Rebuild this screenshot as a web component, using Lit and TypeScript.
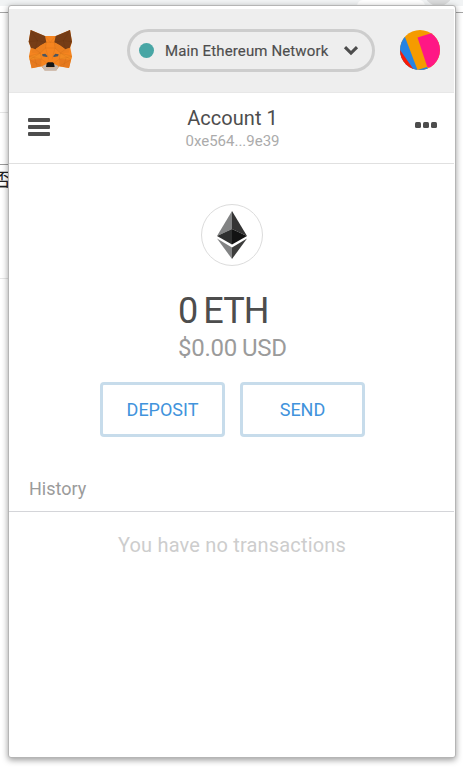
import { LitElement, html, css, svg } from "lit";
import { customElement, property } from "lit/decorators.js";

@customElement("fox-logo")
class FoxLogo extends LitElement {
  static styles = css`
    :host, svg { display: block; width: 45px; height: 43px; }
  `;
  render() {
    const facets: [string, string][] = [
      ["32,30 74,48 108,48 150,30 156,65 151,83 156,109 147,144 118,139 109,151 74,151 64,139 35,145 27,109 32,83 26,65", "#f5841f"],
      ["32,30 75,48 79,67 62,76 46,88 33,84 30,76 26,65", "#763d16"],
      ["150,30 107,48 103,67 120,76 136,88 149,84 152,76 156,65", "#763d16"],
      ["46,88 79,67 77,84 61,99 36,98 33,84", "#ec801f"],
      ["136,88 103,67 105,84 121,99 146,98 149,84", "#ec801f"],
      ["27,109 62,99 64,117 29,119", "#f28a21"],
      ["156,109 120,99 118,117 153,119", "#f28a21"],
      ["29,119 64,117 64,139 35,145", "#e67a1f"],
      ["153,119 118,117 118,139 147,144", "#e67a1f"],
      ["66,103 76,101 83,109 80,111 68,109", "#4a5560"],
      ["116,103 106,101 99,109 102,111 114,109", "#4a5560"],
      ["66,139 81,131 81,142 101,142 101,131 116,139 109,152 74,152", "#c7b9ae"],
      ["80,130 84,127 98,127 102,130 104,141 78,141", "#161616"],
    ];
    return html`<svg viewBox="24 27 135 129">
      ${facets.map(([p, c]) => svg`<polygon points=${p} fill=${c}></polygon>`)}
      <path d="M79 67 77 84 61 99 29 119 64 139M46 88 61 99 64 117 27 109 61 99M136 88 121 99 118 117 156 109 121 99M75 48 91 67 107 48M79 67H103L105 84 121 99 153 119 118 139M77 84 86 118M105 84 96 118M77 84H105M64 117 81 130M118 117 101 130M44 114 52 142M138 114 130 142"
        fill="none" stroke="#a34f10" stroke-width="1.1" opacity=".38"></path>
      <path d="M32 30 52 62 79 67M26 65 52 62 46 88M150 30 130 62 103 67M156 65 130 62 136 88"
        fill="none" stroke="#54290d" stroke-width="1.1" opacity=".4"></path>
    </svg>`;
  }
}

@customElement("network-picker")
class NetworkPicker extends LitElement {
  @property() name = "";
  static styles = css`
    :host {
      box-sizing: border-box; display: flex; align-items: center;
      width: 248px; height: 43px; padding: 0 12px 0 9px;
      border: 3px solid #cdcdcd; border-radius: 22px;
    }
    .dot { width: 15px; height: 15px; border-radius: 50%; background: #48a6a5; }
    .name { margin-left: 11px; flex: 1; font-size: 15px; -webkit-text-stroke: 0.15px #4d4d4d; letter-spacing: 0.13px; color: #4d4d4d; white-space: nowrap; }
    svg { display: block; width: 16px; height: 11px; margin-right: 1px; }
  `;
  render() {
    return html`<span class="dot"></span><span class="name">${this.name}</span>
      <svg viewBox="0 0 16 11"><path d="M2 2.2 8 8.1 14 2.2" fill="none" stroke="#4d4d4d" stroke-width="3.1"></path></svg>`;
  }
}

@customElement("app-root")
class AppRoot extends LitElement {
  static styles = css`
    :host {
      display: block; position: relative; width: 463px; height: 768px; overflow: hidden;
      background: #fff; font-family: Roboto, "Noto Sans", sans-serif;
    }
    .page { position: absolute; inset: 0; overflow: hidden; }
    .tabs { height: 6px; background: #f1f3f4; }
    .rule { position: absolute; left: 0; width: 100%; height: 1px; background: #e6e6e6; }
    .r1 { top: 12px; background: #a5a5a5; }
    .r2 { top: 112px; width: 9px; }
    .r3 { top: 164px; width: 9px; background: #999; }
    .r4 { top: 187px; width: 9px; background: #999; }
    .r5 { top: 278px; width: 9px; }
    .glyph { position: absolute; left: -7px; top: 167px; font: 18px/22px "Noto Sans CJK SC", sans-serif; color: #222; }
    .bubble { position: absolute; border-radius: 50%; }
    .b1 { left: 424px; top: -23px; width: 29px; height: 29px; background: #dadbdc; }
    .b2 { left: 357px; top: 0; width: 68px; height: 6px; border-radius: 8px 8px 0 0; background: #fff; }
    .panel {
      position: absolute; left: 8px; top: 5px; width: 448px; height: 753px; box-sizing: border-box;
      display: flex; flex-direction: column; padding-top: 3px;
      border: 1px solid #b5b5b5; border-radius: 3px; background: #fff;
      box-shadow: 0 2px 6px rgba(0, 0, 0, .4);
    }
    .top {
      box-sizing: border-box; height: 84px; width: 445px; flex: none; display: flex; align-items: center;
      justify-content: space-between; padding: 0 14px 0 19px;
      background: #eee; border-bottom: 1px solid #e7e7e7;
    }
    .top network-picker { margin-left: 29px; }
    .avatar { display: block; width: 40px; height: 40px; margin-bottom: 2px; }
    .account {
      box-sizing: border-box; height: 71px; flex: none; display: flex; justify-content: space-between;
      width: 445px; padding: 0 17px 0 19px; border-bottom: 1px solid #e0e0e0;
    }
    .menu { display: flex; flex-direction: column; gap: 3px; width: 22px; padding-top: 25px; }
    .menu i { height: 4px; border-radius: 1px; background: #4d4d4d; }
    .who { text-align: center; padding-top: 12px; }
    .title { font-size: 20px; line-height: 26px; letter-spacing: 0.05px; color: #4d4d4d; }
    .addr { font-size: 15px; line-height: 18px; margin-top: 1px; color: #ababab; }
    .more { display: flex; gap: 2px; padding-top: 29px; }
    .more i { width: 6px; height: 6px; border-radius: 1.5px; background: #4d4d4d; }
    .coin {
      box-sizing: border-box; width: 62px; height: 62px; flex: none; margin: 40px 0 0 192px; display: grid; place-items: center;
      border: 1px solid #dcdcdc; border-radius: 50%;
    }
    .coin svg { display: block; width: 30px; height: 48px; }
    .balance { margin: 25px 0 0 169px; white-space: nowrap; }
    .eth { font-size: 36px; line-height: 42px; margin-top: -1px; margin-bottom: 1px; word-spacing: -2px; letter-spacing: -0.9px; color: #4d4d4d; }
    .usd { font-size: 24px; line-height: 30px; word-spacing: -0.6px; letter-spacing: -0.27px; color: #9b9b9b; }
    .actions { display: flex; gap: 15px; margin: 19px 0 0 91px; }
    button {
      box-sizing: border-box; width: 125px; height: 55px; padding: 0; border: 3px solid #c7dceb;
      border-radius: 4px; background: #fff; color: #4193dc; font: 18px Roboto, sans-serif;
    }
    .history {
      box-sizing: border-box; height: 37px; width: 445px; margin-top: 38px; padding-left: 20px; border-bottom: 1px solid #d4d5d9;
      font-size: 18px; line-height: 28px; color: #9b9b9b;
    }
    .empty { margin-top: 20px; text-align: center; font-size: 20px; line-height: 26px; letter-spacing: 0.18px; color: #cdcdcd; }
  `;
  render() {
    return html`
      <div class="page">
        <div class="tabs"></div>
        <span class="bubble b2"></span><span class="bubble b1"></span>
        <i class="rule r1"></i><i class="rule r2"></i><i class="rule r3"></i><i class="rule r4"></i><i class="rule r5"></i>
        <span class="glyph">否</span>
      </div>
      <main class="panel">
        <header class="top">
          <fox-logo></fox-logo>
          <network-picker name="Main Ethereum Network"></network-picker>
          <svg class="avatar" viewBox="0 0 40 40">
            <clipPath id="disc"><circle cx="20" cy="20" r="20"></circle></clipPath>
            <g clip-path="url(#disc)">
              <path fill="#f59b00" d="M0 0H40V40H0z"></path>
              <path fill="#2583e3" d="M0 0 5 7 17.5 40H0z"></path>
              <path fill="#fa1a05" d="M-2 17 14 40H-2z"></path>
              <path fill="#2583e3" d="M16.5 40.3 27 37 30 42H17z"></path>
              <path fill="#ff1785" d="M17.5 7.5 40 .5V40L27.3 37z"></path>
            </g>
          </svg>
        </header>
        <section class="account">
          <div class="menu"><i></i><i></i><i></i></div>
          <div class="who">
            <div class="title">Account 1</div>
            <div class="addr">0xe564...9e39</div>
          </div>
          <div class="more"><i></i><i></i><i></i></div>
        </section>
        <div class="coin">
          <svg viewBox="0 0 30 48">
            <path fill="#828384" d="M15 0V18L0 25z"></path>
            <path fill="#343434" d="M15 0 30 25 15 18z"></path>
            <path fill="#2f3030" d="M15 18V33.5L0 25z"></path>
            <path fill="#131313" d="M15 18 30 25 15 33.5z"></path>
            <path fill="#828384" d="M0 27.5 15 36.5V48z"></path>
            <path fill="#3c3c3b" d="M30 27.5 15 36.5V48z"></path>
          </svg>
        </div>
        <div class="balance">
          <div class="eth">0 ETH</div>
          <div class="usd">$0.00 USD</div>
        </div>
        <div class="actions"><button>DEPOSIT</button><button>SEND</button></div>
        <div class="history">History</div>
        <div class="empty">You have no transactions</div>
      </main>`;
  }
}
